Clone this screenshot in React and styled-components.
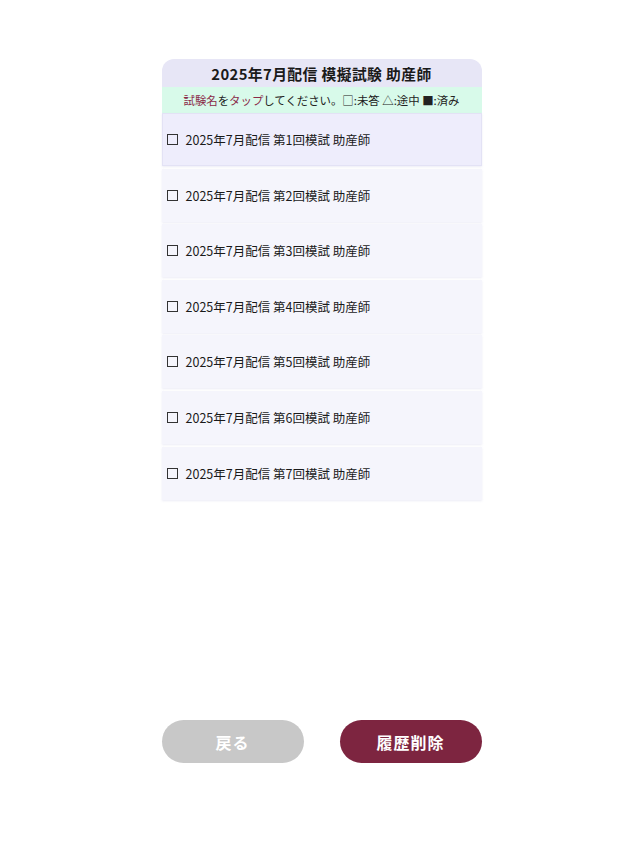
import React from 'react'
import styled, { createGlobalStyle } from 'styled-components'

const GlobalStyle = createGlobalStyle`
  html, body {
    margin: 0;
    padding: 0;
    background: #ffffff;
    font-family: "Noto Sans CJK JP", "Noto Sans", sans-serif;
    color: #1a1a1a;
  }
`

const exams = [1, 2, 3, 4, 5, 6, 7].map(n => `2025年7月配信 第${n}回模試 助産師`)

export default function App() {
    return (
        <Page>
            <GlobalStyle />
            <Panel>
                <Title>2025年7月配信 模擬試験 助産師</Title>
                <Hint>
                    <Accent>試験名</Accent>を<Accent>タップ</Accent>してください。□:未答 △:途中 ■:済み
                </Hint>
                <List>
                    {exams.map((name, i) => (
                        <Row key={name} active={i === 0}>
                            <Box />
                            <span>{name}</span>
                        </Row>
                    ))}
                </List>
            </Panel>
            <Buttons>
                <Button variant="back">戻る</Button>
                <Button variant="clear">履歴削除</Button>
            </Buttons>
        </Page>
    )
}

const Page = styled.div`
    width: 320px;
    height: 858px;
    margin: 0 auto;
    padding-top: 59px;
    box-sizing: border-box;
    display: flex;
    flex-direction: column;
`

const Panel = styled.div`
    display: flex;
    flex-direction: column;
`

const Title = styled.div`
    height: 28px;
    background: #e7e6f6;
    border-radius: 12px 12px 0 0;
    display: flex;
    align-items: center;
    justify-content: center;
    font-size: 14.8px;
    font-weight: 700;
    letter-spacing: 0.4px;
`

const Hint = styled.div`
    height: 26px;
    background: #d8faea;
    display: flex;
    align-items: center;
    justify-content: center;
    font-size: 11.4px;
    color: #222;
`

const Accent = styled.span`
    color: #8a2a48;
`

const List = styled.div`
    display: flex;
    flex-direction: column;
    gap: 2.6px;
`

const Row = styled.div`
    height: 53px;
    box-sizing: border-box;
    display: flex;
    align-items: center;
    gap: 8px;
    padding-left: 4px;
    font-size: 12.5px;
    background: ${p => (p.active ? '#eeedfc' : '#f5f5fc')};
    border: 1px solid ${p => (p.active ? '#e3e2f5' : 'transparent')};
    box-shadow: 0 1px 2px rgba(200, 200, 225, 0.35);
`

const Box = styled.span`
    width: 9px;
    height: 9px;
    border: 1.6px solid #333;
    flex: none;
`

const Buttons = styled.div`
    margin-top: auto;
    margin-bottom: 95px;
    display: flex;
    justify-content: space-between;
`

const Button = styled.button`
    width: 142px;
    height: 43px;
    border: none;
    border-radius: 22px;
    font-family: inherit;
    font-size: 16px;
    font-weight: 700;
    letter-spacing: 1px;
    color: #ffffff;
    background: ${p => (p.variant === 'back' ? '#c8c8c8' : '#7d2540')};
`
